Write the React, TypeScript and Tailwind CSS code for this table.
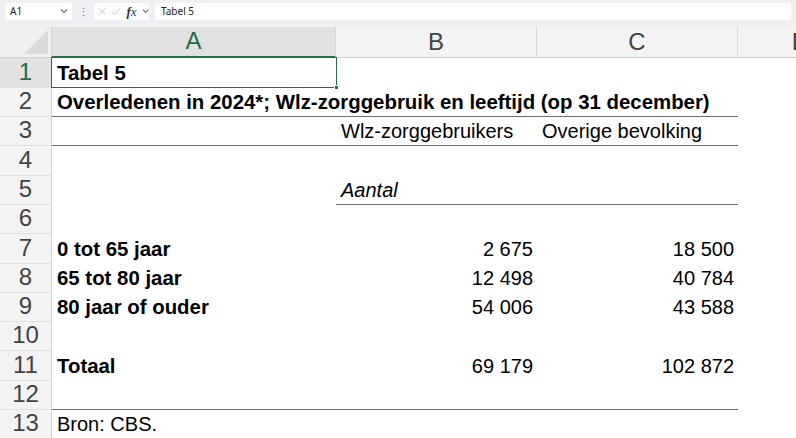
import React from 'react';

type Cell = {
  text?: string;
  bold?: boolean;
  italic?: boolean;
  right?: boolean;
  line?: boolean;
};

type Row = {
  n: number;
  h: string;
  a?: Cell;
  b?: Cell;
  c?: Cell;
};

const rows: Row[] = [
  { n: 1, h: 'h-[30px]', a: { text: 'Tabel 5', bold: true } },
  {
    n: 2,
    h: 'h-[29px]',
    a: { text: 'Overledenen in 2024*; Wlz-zorggebruik en leeftijd (op 31 december)', bold: true, line: true },
    b: { line: true },
    c: { line: true },
  },
  {
    n: 3,
    h: 'h-[29px]',
    a: { line: true },
    b: { text: 'Wlz-zorggebruikers', line: true },
    c: { text: 'Overige bevolking', line: true },
  },
  { n: 4, h: 'h-[30px]' },
  { n: 5, h: 'h-[29px]', b: { text: 'Aantal', italic: true, line: true }, c: { line: true } },
  { n: 6, h: 'h-[29px]' },
  { n: 7, h: 'h-[30px]', a: { text: '0 tot 65 jaar', bold: true }, b: { text: '2 675', right: true }, c: { text: '18 500', right: true } },
  { n: 8, h: 'h-[29px]', a: { text: '65 tot 80 jaar', bold: true }, b: { text: '12 498', right: true }, c: { text: '40 784', right: true } },
  { n: 9, h: 'h-[29px]', a: { text: '80 jaar of ouder', bold: true }, b: { text: '54 006', right: true }, c: { text: '43 588', right: true } },
  { n: 10, h: 'h-[29px]' },
  { n: 11, h: 'h-[30px]', a: { text: 'Totaal', bold: true }, b: { text: '69 179', right: true }, c: { text: '102 872', right: true } },
  { n: 12, h: 'h-[29px]', a: { line: true }, b: { line: true }, c: { line: true } },
  { n: 13, h: 'h-[29px]', a: { text: 'Bron: CBS.' } },
];

function SheetCell({ cell, width, selected }: { cell?: Cell; width: string; selected?: boolean }) {
  return (
    <div
      className={`relative flex items-end shrink-0 ${width} ${cell?.line ? 'border-b border-[#6f6f6f]' : 'border-b border-transparent'} ${cell?.right ? 'justify-end pr-[4px]' : 'pl-[5px]'}`}
    >
      {cell?.text && (
        <span
          className={`whitespace-nowrap leading-[22px] pb-[3px] text-black ${cell.bold ? 'font-bold text-[20.4px]' : 'text-[20px]'} ${cell.italic ? 'italic' : ''}`}
        >
          {cell.text}
        </span>
      )}
      {selected && (
        <>
          <div className="absolute -top-px -left-px -right-px -bottom-px border-[1.5px] border-[#217346]" />
          <div className="absolute -right-[3px] -bottom-[3px] w-[5px] h-[5px] bg-[#217346] border border-white" />
        </>
      )}
    </div>
  );
}

function Chevron() {
  return (
    <svg width="8" height="6" viewBox="0 0 8 6" fill="none" stroke="#6b6e73" strokeWidth="1.2">
      <path d="M1 1.5 L4 4.5 L7 1.5" />
    </svg>
  );
}

function FormulaBar() {
  return (
    <div className="flex items-center h-[22px] bg-[#eef0f3] px-[5px] gap-[6px] font-['Noto_Sans',sans-serif]">
      <div className="flex items-center justify-between w-[67px] h-[17px] bg-white rounded-[3px] pl-[5px] pr-[4px]">
        <span className="text-[10px] text-[#222]">A1</span>
        <Chevron />
      </div>
      <span className="text-[11px] text-[#6b6e73] leading-none w-[10px] text-center">⋮</span>
      <div className="flex items-center w-[55px] h-[17px] bg-white rounded-[3px] pl-[4px] gap-[5px]">
        <svg width="9" height="9" viewBox="0 0 9 9" stroke="#c3c6ca" strokeWidth="1">
          <path d="M1 1 L8 8 M8 1 L1 8" />
        </svg>
        <svg width="11" height="9" viewBox="0 0 11 9" fill="none" stroke="#c3c6ca" strokeWidth="1">
          <path d="M1 5 L4 8 L10 1" />
        </svg>
        <span className="text-[13px] italic font-['Liberation_Serif',serif] text-[#333] leading-none">
          <span className="font-bold">f</span>x
        </span>
        <Chevron />
      </div>
      <div className="flex items-center flex-1 h-[17px] bg-white rounded-l-[3px] pl-[6px]">
        <span className="text-[10px] text-[#222]">Tabel 5</span>
      </div>
    </div>
  );
}

function ColumnHeader({ label, width, active }: { label: string; width: string; active?: boolean }) {
  return (
    <div
      className={`flex items-end justify-center shrink-0 ${width} border-r border-[#d8d8d8] ${active ? 'bg-[#e2e2e2] text-[#1e6e42] border-b-2 border-b-[#217346]' : 'bg-[#f3f3f3] text-[#444] border-b border-b-[#d0d0d0]'}`}
    >
      <span className="text-[24px] leading-[28px] pb-[1px]">{label}</span>
    </div>
  );
}

export default function App() {
  return (
    <div className="w-[796px] h-[438px] overflow-hidden bg-white font-['Liberation_Sans',Arial,sans-serif]">
      <FormulaBar />
      <div className="h-[5px] bg-[#eef0f3]" />
      <div className="flex h-[31px]">
        <div className="relative w-[52px] shrink-0 bg-[#f0f0f0] border-r border-b border-[#d0d0d0]">
          <svg className="absolute right-[3px] bottom-[3px]" width="24" height="24" viewBox="0 0 24 24">
            <path d="M24 0 L24 24 L0 24 Z" fill="#d9d9d9" />
          </svg>
        </div>
        <ColumnHeader label="A" width="w-[284px]" active />
        <ColumnHeader label="B" width="w-[201px]" />
        <ColumnHeader label="C" width="w-[201px]" />
        <ColumnHeader label="D" width="w-[126px]" />
      </div>
      {rows.map((row) => (
        <div key={row.n} className={`flex ${row.h}`}>
          <div
            className={`flex items-end justify-center w-[52px] shrink-0 border-r border-b border-r-[#d0d0d0] border-b-[#e0e0e0] ${row.n === 1 ? 'bg-[#e2e2e2] text-[#1e6e42]' : 'bg-[#f3f3f3] text-[#444]'}`}
          >
            <span className="text-[24px] leading-[28px] pb-[1px]">{row.n}</span>
          </div>
          <SheetCell cell={row.a} width="w-[284px]" selected={row.n === 1} />
          <SheetCell cell={row.b} width="w-[201px]" />
          <SheetCell cell={row.c} width="w-[201px]" />
          <SheetCell width="w-[126px]" />
        </div>
      ))}
    </div>
  );
}
